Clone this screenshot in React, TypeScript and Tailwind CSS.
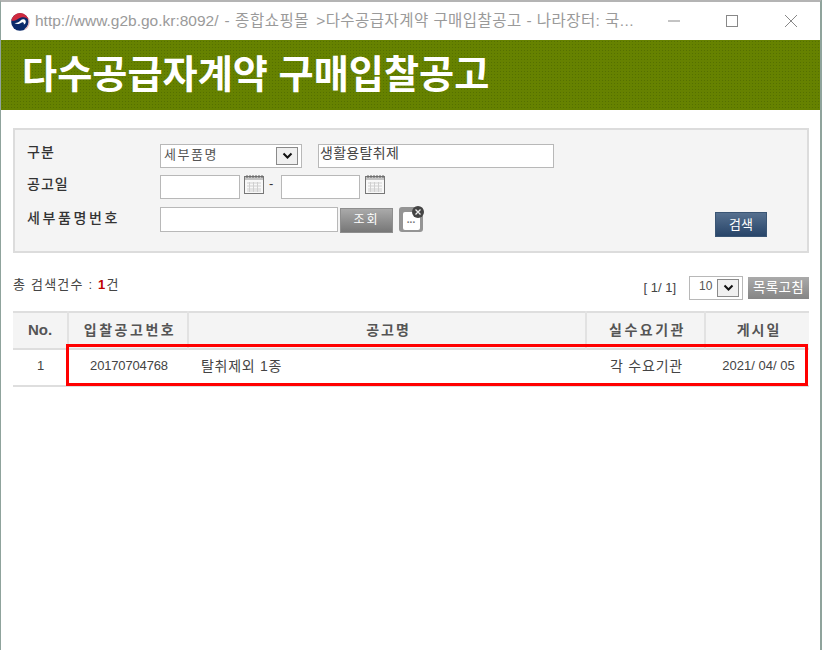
const kr = "font-['Liberation_Sans','Noto_Sans_CJK_KR',sans-serif]";

function Logo() {
  return (
    <svg width="20" height="20" viewBox="0 0 20 20" className="shrink-0">
      <circle cx="10" cy="10" r="10" fill="#fff" />
      <circle cx="10" cy="11" r="8.800" fill="#0b2a6b" />
      <path d="M1.400 9.500A8.800 8.800 0 0 1 18.800 9.500C17.500 6.500 14 5.500 11 6.500C8.500 7.300 6.500 9.500 4 9.800C3 9.900 2 9.800 1.400 9.500Z" fill="#cf2a3f" />
      <path d="M18.500 7.500A9 9 0 0 1 15 18.300" fill="none" stroke="#e8b9bf" strokeWidth="1.200" />
      <path d="M4.500 12C7 12.500 9 11 10.500 9.500C12 8 14.500 7.800 15.500 9.500C16.300 11 15.500 13 13.800 13.500C14.300 11.800 13 10.800 11.800 11.500C10 12.800 7 14 4.500 12Z" fill="#fff" />
    </svg>
  );
}

function Calendar() {
  return (
    <svg width="20" height="19" viewBox="0 0 20 19" className="shrink-0">
      <rect x=".5" y="1.500" width="19" height="17" fill="#f8f8f8" stroke="#777" />
      <rect x="1" y="2" width="18" height="3" fill="#c4c4c4" />
      <path d="M3 0v3M6 0v3M9 0v3M12 0v3M15 0v3M18 0v3" stroke="#666" />
      <path d="M3 8h14M3 11h14M3 14h14M3 16h14M5.500 7v10M9.500 7v10M13.500 7v10" stroke="#d0d0d0" />
    </svg>
  );
}

function SelectArrow() {
  return (
    <span className="flex h-[18px] w-[22px] items-center justify-center border border-[#8a8a8a] bg-[#f0f0f0]">
      <svg width="11" height="8" viewBox="0 0 11 8">
        <path d="M1.500 1.500L5.500 5.500L9.500 1.500" fill="none" stroke="#111" strokeWidth="2" />
      </svg>
    </span>
  );
}

const fieldClass = "h-[24px] border border-[#b8b8b8] bg-white";

export default function App() {
  return (
    <div className={`${kr} h-[650px] w-[822px] overflow-hidden bg-[#8fa39c]`}>
      <div className="h-[650px] w-[821px] border-x border-t-2 border-x-[#8fa39c] border-t-[#b4b4b4] bg-white">
        {/* Title bar */}
        <div className="flex h-[38px] items-center pl-[9px] text-[15.500px] text-[#9a9a9a]">
          <Logo />
          <span className="ml-[5px] whitespace-nowrap">http://www.g2b.go.kr:8092/</span>
          <span className="ml-[6px] whitespace-nowrap tracking-[0.55px]">- 종합쇼핑몰</span>
          <span className="ml-[7px] whitespace-nowrap tracking-[0.45px]">&gt;다수공급자계약 구매입찰공고 - 나라장터: 국...</span>
          <svg width="132" height="16" viewBox="0 0 132 16" className="ml-auto mr-[22px] shrink-0">
            <path d="M2 8H14" stroke="#888" />
            <rect x="60.500" y="2.500" width="11" height="11" fill="none" stroke="#888" />
            <path d="M119 2L131 14M131 2L119 14" stroke="#888" />
          </svg>
        </div>

        {/* Header */}
        <div className="flex h-[70px] items-center bg-[#668200] bg-[image:radial-gradient(#557000_0.8px,transparent_0.9px)] bg-[size:3px_3px] pl-[21px] text-[38.200px] font-bold text-white">
          다수공급자계약 구매입찰공고
        </div>

        <div className="pl-[12px] pr-[12px] pt-[18px]">
          {/* Search panel */}
          <div className="relative h-[125px] w-[796px] border-2 border-[#dcdcdc] bg-[#f4f4f4] pl-[12px] pt-[14px] text-[#333]">
            <div className="flex h-[24px] items-center">
              <span className="w-[133px] pb-[8px] text-[14px] font-medium tracking-[1px]">구분</span>
              <div className={`${fieldClass} flex w-[142px] items-center justify-between pl-[3px] pr-[3px] text-[13px] tracking-[1.500px] text-[#555]`}>
                <span className="pb-[3px]">세부품명</span>
                <SelectArrow />
              </div>
              <div className={`${fieldClass} ml-[16px] w-[236px] pb-[3px] pl-[1px] text-[14px] leading-[17px] tracking-[0.300px] text-[#444]`}>생활용탈취제</div>
            </div>
            <div className="mt-[7px] flex h-[23px] items-center">
              <span className="w-[133px] pb-[4px] text-[14px] font-medium tracking-[1px]">공고일</span>
              <div className={`${fieldClass} h-[23px] w-[80px]`} />
              <span className="mb-[4px] ml-[4px]"><Calendar /></span>
              <span className="mb-[6px] ml-[5px] w-[12px] text-[13px] leading-none">-</span>
              <div className={`${fieldClass} h-[23px] w-[79px]`} />
              <span className="mb-[4px] ml-[5px]"><Calendar /></span>
            </div>
            <div className="mt-[9px] flex h-[25px] items-center">
              <span className="w-[133px] pb-[3px] text-[14px] font-medium tracking-[2.600px]">세부품명번호</span>
              <div className={`${fieldClass} h-[25px] w-[178px]`} />
              <button className="ml-[2px] mt-[1px] h-[25px] w-[53px] border border-[#8e8e8e] bg-gradient-to-b from-[#aaaaaa] to-[#777777] text-[12px] tracking-[2px] text-white">조회</button>
              <div className="relative ml-[6px] flex h-[25px] w-[24px] items-center justify-center rounded-[3px] bg-[#949494]">
                <div className="mt-[2px] flex h-[18px] w-[17px] items-center justify-center rounded-[2px] bg-white pb-[2px] text-[10px] font-bold leading-none text-[#777]">...</div>
                <svg width="12" height="12" viewBox="0 0 12 12" className="absolute -right-[1px] -top-[1px]">
                  <circle cx="6" cy="6" r="6" fill="#444" />
                  <path d="M3.500 3.500L8.500 8.500M8.500 3.500L3.500 8.500" stroke="#eee" strokeWidth="1.300" />
                </svg>
              </div>
            </div>
            <button className="absolute left-[700px] top-[82px] h-[25px] w-[52px] border border-[#3a5574] bg-gradient-to-b from-[#56708f] to-[#284569] text-[13px] text-white">검색</button>
          </div>

          {/* Result summary */}
          <div className="mt-[23px] flex h-[24px] w-[796px] items-center text-[13px] text-[#444]">
            <span className="pb-[6px] tracking-[1.200px]">
              총 검색건수 : <b className="text-[#c00000]">1</b>건
            </span>
            <span className="ml-auto pb-[1px] text-[13px]">[ 1/ 1]</span>
            <div className="ml-[13px] flex h-[24px] w-[54px] items-center justify-between border border-[#b8b8b8] bg-white pl-[9px] pr-[3px] text-[12px] text-[#555]">
              <span className="pb-[4px]">10</span>
              <SelectArrow />
            </div>
            <button className="ml-[5px] h-[22px] w-[61px] bg-gradient-to-b from-[#aaaaaa] to-[#858585] text-[13.500px] tracking-[0.300px] text-white">목록고침</button>
          </div>

          {/* Results table */}
          <div className="relative mt-[11px] w-[796px]">
            <table className="w-full table-fixed border-collapse border-y-2 border-[#dedede] text-[14px] text-[#444]">
              <thead>
                <tr className="h-[37px] bg-[#f4f4f4] text-[#555]">
                  <th className="w-[55px] border-r-2 border-[#e2e2e2] text-[15px]">No.</th>
                  <th className="w-[120px] border-r-2 border-[#e2e2e2] pl-[4px] tracking-[2.500px]">입찰공고번호</th>
                  <th className="w-[398px] border-r-2 border-[#e2e2e2] pl-[3px] tracking-[2px]">공고명</th>
                  <th className="w-[119px] border-r-2 border-[#e2e2e2] pl-[4px] tracking-[2.500px]">실수요기관</th>
                  <th className="pl-[3px] tracking-[2px]">게시일</th>
                </tr>
              </thead>
              <tbody>
                <tr className="h-[37px] border-t-2 border-[#dedede] text-[13px]">
                  <td className="pb-[3px] text-center">1</td>
                  <td className="pb-[3px] pl-[2px] text-center tracking-[-0.150px]">20170704768</td>
                  <td className="pb-[3px] pl-[13px] text-[14px] tracking-[0.700px]">탈취제외 1종</td>
                  <td className="pb-[3px] pl-[2px] text-center text-[14px] tracking-[0.800px]">각 수요기관</td>
                  <td className="pb-[3px] pl-[3px] text-center">2021/ 04/ 05</td>
                </tr>
              </tbody>
            </table>
            {/* Red highlight drawn over the row */}
            <div className="absolute left-[53px] top-[33px] h-[42px] w-[742px] border-[3px] border-[#ff0000]" />
          </div>
        </div>
      </div>
    </div>
  );
}
